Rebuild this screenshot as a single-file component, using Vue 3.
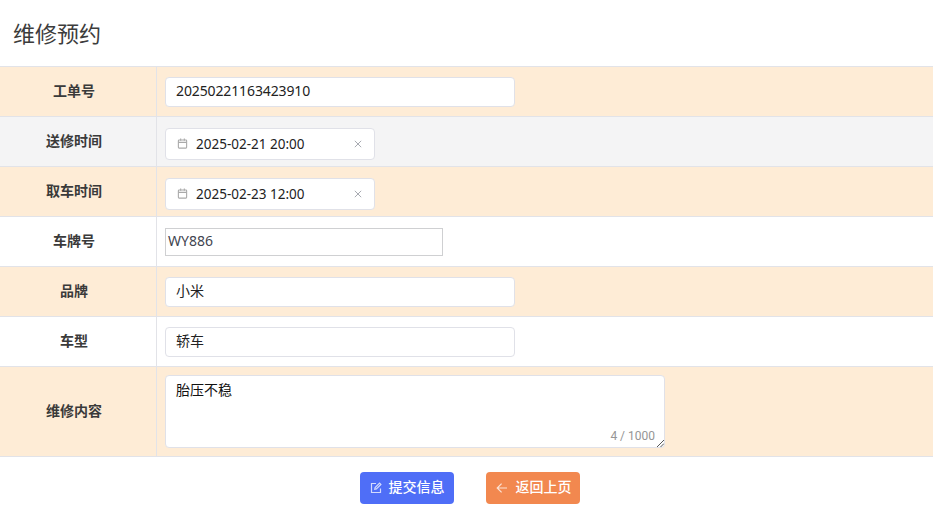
<script setup>
const rows = [
  { label: '工单号', kind: 'input', value: '20250221163423910', tone: 'peach', dark: true },
  { label: '送修时间', kind: 'date', value: '2025-02-21 20:00', tone: 'grey' },
  { label: '取车时间', kind: 'date', value: '2025-02-23 12:00', tone: 'peach' },
  { label: '车牌号', kind: 'plain', value: 'WY886', tone: 'white' },
  { label: '品牌', kind: 'input', value: '小米', tone: 'peach' },
  { label: '车型', kind: 'input', value: '轿车', tone: 'white' },
  { label: '维修内容', kind: 'area', value: '胎压不稳', tone: 'peach' }
]
</script>

<template>
  <div class="page">
    <h2 class="title">维修预约</h2>
    <div class="table">
      <div v-for="row in rows" :key="row.label" class="row" :class="[row.tone, { tall: row.kind === 'area' }]">
        <div class="label">{{ row.label }}</div>
        <div class="cell">
          <div v-if="row.kind === 'input'" class="field text-field">{{ row.value }}</div>
          <div v-else-if="row.kind === 'date'" class="field date-field">
            <svg class="cal" viewBox="0 0 12 12" width="11" height="11" fill="none" stroke="#aaaaaa" stroke-width="1.2">
              <rect x="1.5" y="2.2" width="9" height="8.8" rx="0.8" />
              <path d="M1.5 4.8h9M4 .6v2.4M8 .6v2.4" />
            </svg>
            <span class="date-value">{{ row.value }}</span>
            <svg class="clear" viewBox="0 0 8 8" width="8" height="8" fill="none" stroke="#a8abb2" stroke-width="1">
              <path d="M.8.8l6.4 6.4M7.2.8L.8 7.2" />
            </svg>
          </div>
          <div v-else-if="row.kind === 'plain'" class="plain-field">{{ row.value }}</div>
          <div v-else class="field area-field">
            <span class="area-text">{{ row.value }}</span>
            <span class="count">4 / 1000</span>
            <svg class="grip" viewBox="0 0 8 8" width="8" height="8" fill="none" stroke="#444" stroke-width="0.9">
              <path d="M1 8L8 1M4.5 8L8 4.5" />
            </svg>
          </div>
        </div>
      </div>
    </div>
    <div class="actions">
      <button class="btn blue" type="button">
        <svg viewBox="0 0 12 12" width="12" height="12" fill="none" stroke="currentColor" stroke-width="1.2">
          <path d="M10.5 6.5v4h-9v-9h4.5" />
          <path d="M4.8 7.2l.3-1.6L9.6 1.1l1.3 1.3-4.5 4.5z" />
        </svg>
        <span>提交信息</span>
      </button>
      <button class="btn orange" type="button">
        <svg viewBox="0 0 12 12" width="12" height="12" fill="none" stroke="currentColor" stroke-width="1.2">
          <path d="M11 6H1.2M5.6 1.6L1.2 6l4.4 4.4" />
        </svg>
        <span>返回上页</span>
      </button>
    </div>
  </div>
</template>

<style>
html, body { background: #fff; }
</style>

<style scoped>
.page {
  width: 933px;
  height: 516px;
  overflow: hidden;
  background: #fff;
  font-family: "Noto Sans", "Noto Sans CJK SC", sans-serif;
  color: #303133;
}
.title {
  margin: 0;
  height: 66px;
  padding-left: 13px;
  box-sizing: border-box;
  font-size: 22px;
  font-weight: 400;
  line-height: 66px;
  color: #3c3c3c;
}
.table { border-top: 1px solid #e2e3e8; margin-top: 0; }
.row {
  display: flex;
  height: 50px;
  box-sizing: border-box;
  border-bottom: 1px solid #e2e3e8;
}
.row.tall { height: 90px; }
.peach { background: #feecd6; }
.grey { background: #f4f4f5; }
.white { background: #fff; }
.label {
  width: 157px;
  box-sizing: border-box;
  border-right: 1px solid #e2e3e8;
  display: flex;
  align-items: center;
  justify-content: center;
  padding: 0 8px 4px 0;
  font-size: 14px;
  font-weight: 700;
  color: #3a3a3a;
}
.cell {
  flex: 1;
  display: flex;
  align-items: center;
  padding-left: 8px;
}
.field {
  box-sizing: border-box;
  background: #fff;
  border: 1px solid #e0e1e8;
  border-radius: 4px;
  font-size: 14px;
  color: #222;
}
.text-field {
  width: 350px;
  height: 30px;
  line-height: 26px;
  padding-left: 10px;
  letter-spacing: -0.12px;
}
.date-field {
  width: 210px;
  height: 32px;
  margin-top: 4px;
  display: flex;
  align-items: center;
  padding: 0 12px 0 11px;
}
.cal { flex: none; }
.date-value { margin-left: 8px; flex: 1; font-size: 13.5px; }
.clear { flex: none; }
.plain-field {
  box-sizing: border-box;
  width: 278px;
  height: 28px;
  border: 1px solid #cfd0d2;
  background: #fff;
  font-size: 14px;
  line-height: 23px;
  padding-left: 2px;
  color: #3f4550;
}
.area-field {
  position: relative;
  width: 500px;
  height: 73px;
  padding: 4px 10px;
  line-height: 20px;
  color: #111;
}
.area-text { display: block; }
.count {
  position: absolute;
  right: 9px;
  bottom: 2px;
  font-size: 12px;
  line-height: 18px;
  color: #959595;
  font-family: Roboto, "Noto Sans", sans-serif;
}
.grip { position: absolute; right: 0; bottom: 0; }
.actions {
  display: flex;
  justify-content: center;
  gap: 32px;
  padding: 15px 0 0 6px;
}
.btn {
  width: 94px;
  height: 32px;
  border: none;
  border-radius: 4px;
  color: #fff;
  display: flex;
  align-items: center;
  gap: 7px;
  padding: 0 0 4px 10px;
  font-family: inherit;
  font-size: 14px;
  font-weight: 500;
}
.btn svg { opacity: 0.75; margin-top: 4px; }
.orange span { margin-left: 1px; }
.blue { background: #4f6ef7; }
.orange { background: #f2884f; }
</style>
